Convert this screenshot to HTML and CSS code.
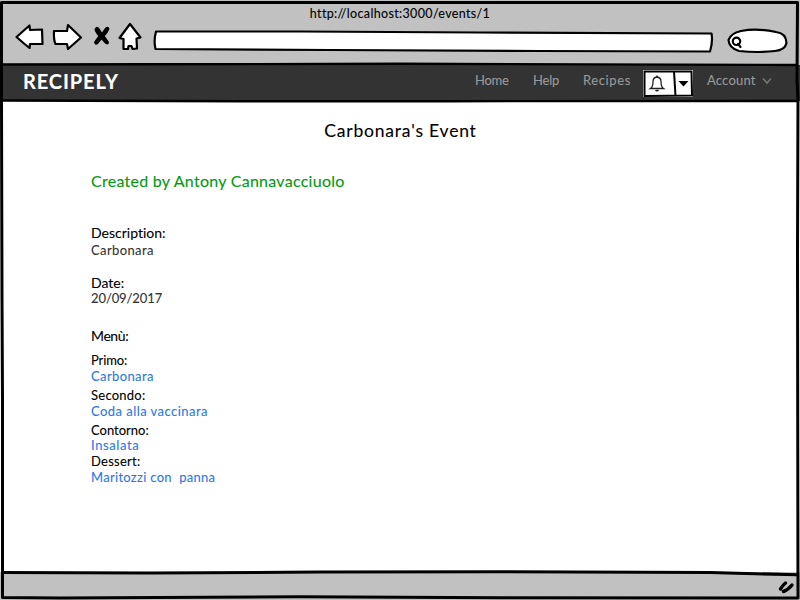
FILE: index.html
```
<!DOCTYPE html>
<html lang="en">
<head>
<meta charset="utf-8">
<title>Recipely</title>
<link rel="stylesheet" href="styles.css">
</head>
<body>
<div class="browser">
  <header class="chrome">
    <div class="address">http://localhost:3000/events/1</div>
    <svg class="toolbar" width="800" height="42" viewBox="0 22 800 42">
      <g class="sketch">
        <path d="M16.500 37L29.500 25.500L30 30L42 29.500L42.500 44L30 44L29.500 48L24 43.500Z"/>
        <path d="M54 31L67 31L68 25L81 37.500L68 49L67 44L55.500 44Q53.500 40 54 31Z"/>
        <path d="M130 24L140.500 37.500L136.500 38.500L137 48.500L132.500 49L131.500 46L128.500 46L128 49L123.500 49L123.500 39L119.500 38Z"/>
        <path d="M156 31.500L300 31.500L480 32.500L711.500 33.500Q713 42 710 51.500L540 51L330 50L155.500 49Q153.500 41 156 31.500Z"/>
        <path d="M741 31Q757 28 776 32Q786 33 786.500 43Q785 50 775 51Q758 53 739 51Q729 48 728.500 40Q731 33 741 31Z"/>
        <circle cx="736.500" cy="41.300" r="3.700"/><path d="M738 44L740.500 47"/>
      </g>
      <path class="cross" d="M94.500 29Q97 25 99.500 28.500L102 32.500L105 28Q108.500 25 109.500 29Q108 33 104.800 36L109 42Q109 46 105 43.500L101.500 39.500L98 44Q94.500 46 94 42L98.300 36Q94.500 31.500 94.500 29Z"/>
    </svg>
  </header>

  <nav class="navbar">
    <a class="brand">RECIPELY</a>
    <a class="link home">Home</a>
    <a class="link help">Help</a>
    <a class="link recipes">Recipes</a>
    <svg class="alerts" width="50" height="28" viewBox="643 69 50 28">
      <rect x="643" y="70" width="50" height="27" fill="#fff"/>
      <path d="M644.500 71.500L691.500 71.500L692 95.500L644.500 96ZM674 71L675.500 96" fill="none" stroke="#000" stroke-width="2"/>
      <path d="M650.500 88.500Q653 87 653 81.500Q653 77.500 657 77Q661 77.500 661 81.500Q661 87 663.500 88.500Z" fill="none" stroke="#222" stroke-width="1.300"/>
      <path d="M655.500 90Q657 91.500 658.500 90M657 75.500V77" fill="none" stroke="#222" stroke-width="1.500"/>
      <path d="M678.500 81H688.500L683.500 86.500Z"/>
    </svg>
    <a class="link account">Account</a>
    <svg class="chevron" width="10" height="8" viewBox="0 0 10 8"><path d="M1 1.500L5 6L9 1.500" fill="none" stroke="#777" stroke-width="1.500"/></svg>
  </nav>

  <main class="page">
    <h1 class="title">Carbonara's Event</h1>
    <p class="author">Created by Antony Cannavacciuolo</p>
    <section class="details">
      <h2 class="label description">Description:</h2>
      <p class="value">Carbonara</p>
      <h2 class="label date">Date:</h2>
      <p class="value day">20/09/2017</p>
    </section>
    <section class="menu">
      <h2 class="label heading">Menù:</h2>
      <h3 class="course primo">Primo:</h3>
      <a class="dish">Carbonara</a>
      <h3 class="course secondo">Secondo:</h3>
      <a class="dish coda">Coda alla vaccinara</a>
      <h3 class="course contorno">Contorno:</h3>
      <a class="dish insalata">Insalata</a>
      <h3 class="course dessert">Dessert:</h3>
      <a class="dish maritozzi">Maritozzi con&nbsp; panna</a>
    </section>
  </main>

  <footer class="status"></footer>

  <svg class="frame" width="800" height="600" viewBox="0 0 800 600">
    <path d="M1.500 2.500L400 2.500L797.500 2.500L797 80L798 100L797.500 250L798 598L500 597.800L300 596.800L60 598L2.500 597.500L2.500 400L2 300L1.500 100L1.500 70Z"/>
    <path class="rule" d="M2 64.500L150 64.300L400 63.800L797 65M2 100.500L240 101.200L450 101.200L798 101"/>
    <path d="M2 572.500L150 573L320 572L500 571.800L710 572.500L797 574.800"/>
    <path class="grip" d="M780.500 589Q783 585 785.500 583M783.500 591.500Q788 590 792 585"/>
  </svg>
</div>
</body>
</html>
```
FILE: styles.css
```
* { box-sizing: border-box; }
body {
  margin: 0;
  font-family: Lato, "Liberation Sans", sans-serif;
  font-size: 13px;
  line-height: 16px;
  font-variant-ligatures: none;
  -webkit-text-stroke: 0.1px currentColor;
  color: #000;
  background: #fff;
}
h1, h2, h3, p { margin: 0; font-weight: 400; }

.browser {
  position: relative;
  display: grid;
  grid-template-rows: 65px 36px 471px 28px;
  width: 800px;
  height: 600px;
  overflow: hidden;
}
.frame { position: absolute; inset: 0; pointer-events: none; }
.frame path { fill: none; stroke: #000; stroke-width: 3; stroke-linejoin: round; }
.frame .rule { stroke-width: 2.4; }
.frame .grip { stroke-width: 3.5; stroke-linecap: round; }

.chrome { padding-top: 6px; background: #c1c1c1; }
.address { text-align: center; font-size: 12.5px; letter-spacing: 0.35px; }
.toolbar { display: block; }
.sketch { fill: #fff; stroke: #000; stroke-width: 2.2; stroke-linejoin: round; stroke-linecap: round; }
.cross { fill: #000; }

.navbar { display: flex; align-items: flex-start; padding: 4px 0 0 23px; background: #333; }
.brand { width: 452px; padding-top: 1px; font-size: 20px; line-height: 22px; font-weight: 700; letter-spacing: 0.9px; color: #fff; }
.link { padding-top: 3px; color: #999; white-space: nowrap; }
.home { width: 58px; letter-spacing: -0.3px; }
.help { width: 50px; letter-spacing: -0.2px; }
.recipes { width: 60px; letter-spacing: 0.6px; }
.account { width: 55px; margin-left: 14px; letter-spacing: 0.2px; }
.chevron { margin-top: 8px; }

.page { display: flex; flex-direction: column; padding: 18px 2px 0 91px; background: #fff; }
.title { margin-left: -88px; text-align: center; font-size: 17.5px; line-height: 24px; letter-spacing: 0.8px; }
.author { margin-top: 26px; font-size: 16px; line-height: 24px; letter-spacing: 0.27px; color: #009a0d; }
.details { display: flex; flex-direction: column; margin-top: 32px; }
.label { font-size: 14px; }
.value { margin-top: 1px; letter-spacing: 0.38px; color: #333; }
.date { margin-top: 17px; }
.day { margin-top: -1px; letter-spacing: -0.1px; }
.menu { display: flex; flex-direction: column; margin-top: 22px; }
.heading { letter-spacing: -0.4px; }
.course { font-size: 13px; }
.dish { letter-spacing: 0.38px; color: #2b78e4; }
.primo { margin-top: 8px; letter-spacing: -0.1px; }
.secondo, .contorno { margin-top: 3px; }
.secondo, .dessert { letter-spacing: 0.25px; }
.coda { letter-spacing: 0.45px; }
.insalata { margin-top: -1px; letter-spacing: 0.6px; }
.maritozzi { letter-spacing: 0.3px; }

.status { background: #c1c1c1; }
```
